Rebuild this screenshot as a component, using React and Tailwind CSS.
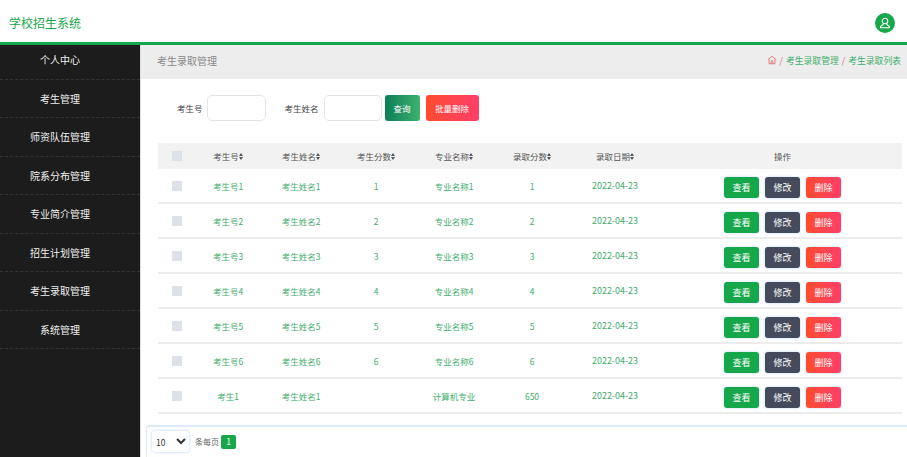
import { useState } from "react";

const menus = ["个人中心", "考生管理", "师资队伍管理", "院系分布管理", "专业简介管理", "招生计划管理", "考生录取管理", "系统管理"];
const heads = [
  { label: "考生号", w: "w-[66px]" },
  { label: "考生姓名", w: "w-[80px]" },
  { label: "考生分数", w: "w-[70px]" },
  { label: "专业名称", w: "w-[86px]" },
  { label: "录取分数", w: "w-[70px]" },
  { label: "录取日期", w: "w-[96px]" },
];
const rows = [
  ["考生号1", "考生姓名1", "1", "专业名称1", "1"],
  ["考生号2", "考生姓名2", "2", "专业名称2", "2"],
  ["考生号3", "考生姓名3", "3", "专业名称3", "3"],
  ["考生号4", "考生姓名4", "4", "专业名称4", "4"],
  ["考生号5", "考生姓名5", "5", "专业名称5", "5"],
  ["考生号6", "考生姓名6", "6", "专业名称6", "6"],
  ["考生1", "考生姓名1", "", "计算机专业", "650"],
];
const widths = ["w-[66px]", "w-[80px]", "w-[70px]", "w-[86px]", "w-[70px]"];

function SortIcon() {
  return (
    <svg width="4" height="7" viewBox="0 0 4 7" className="shrink-0 text-[#555]" fill="currentColor">
      <path d="M2 0 4 3H0z" />
      <path d="M2 7 0 4h4z" />
    </svg>
  );
}

function Check() {
  return (
    <div className="w-[37px] shrink-0 flex justify-center">
      <span className="w-[10px] h-[10px] bg-[#dde1e8] block" />
    </div>
  );
}

function RowButton({ className, children }) {
  return (
    <button className={`w-[35px] h-[21px] rounded-[3px] text-white text-[9px] leading-none shadow-[0_0_3px_#bcd9f5] ${className}`}>
      {children}
    </button>
  );
}

export default function App() {
  const [size, setSize] = useState("10");
  return (
    <div className="w-[907px] h-[457px] overflow-hidden bg-white flex flex-col font-['Noto_Sans_CJK_SC','Liberation_Sans',sans-serif]">
      <header className="h-[45px] shrink-0 border-b-[3px] border-[#16a74a] flex items-center justify-between pt-[3px] pl-[9px] pr-[12px]">
        <h1 className="text-[12px] font-normal text-[#16a74a]">学校招生系统</h1>
        <div className="w-5 h-5 rounded-full bg-[#16a74a] flex items-center justify-center">
          <svg width="12" height="12" viewBox="0 0 24 24" fill="none" stroke="white" strokeWidth="2.2" strokeLinecap="round" strokeLinejoin="round">
            <circle cx="12" cy="8" r="5.5" />
            <path d="M8.5 13 8 15.5 3 19v2.5h18V19l-5-3.5-.5-2.5" />
          </svg>
        </div>
      </header>

      <div className="flex-1 flex min-h-0">
        <aside className="w-[140px] shrink-0 bg-[#1c1c1c]">
          {menus.map((m, i) => (
            <div
              key={m}
              className={`flex items-center justify-center pr-[20px] text-[10px] text-[#f0f0f0] border-b border-dashed border-[#333] ${i === 0 ? "h-[34.5px] pb-[4px]" : "h-[38.5px]"}`}
            >
              {m}
            </div>
          ))}
        </aside>

        <main className="flex-1 min-w-0 border-l-[1px] border-[#ddd]">
          <div className="h-[33.5px] bg-[#ededed] flex items-center justify-between pl-[16px] pr-[6px] pb-[2px]">
            <span className="text-[10px] text-[#888]">考生录取管理</span>
            <div className="flex items-center gap-[3px] text-[8.8px] text-[#3fae6c]">
              <svg width="10" height="10" viewBox="0 0 24 24" fill="none" stroke="#e46a6a" strokeWidth="2" className="mb-[2px]">
                <path d="M2 11 12 3l10 8" />
                <path d="M5 10v11h14V10" />
                <path d="M10 21v-7h4v7" />
              </svg>
              <span className="text-[#e46a6a]">/</span>
              <span>考生录取管理</span>
              <span className="text-[#e46a6a]">/</span>
              <span>考生录取列表</span>
            </div>
          </div>

          <div className="flex items-center h-[26px] mt-[16.5px] pl-[36px] text-[8.5px] text-[#444]">
            <span>考生号</span>
            <input className="w-[59px] h-[26px] ml-[4px] border border-[#e4e4e4] rounded-[5px] bg-white" />
            <span className="ml-[19px]">考生姓名</span>
            <input className="w-[58px] h-[26px] ml-[5px] border border-[#e4e4e4] rounded-[5px] bg-white" />
            <button className="w-[35px] h-[26px] ml-[3px] rounded-[3px] text-white text-[8.5px] bg-gradient-to-r from-[#0b7d57] to-[#3bb36f]">查询</button>
            <button className="w-[53px] h-[26px] ml-[6px] rounded-[3px] text-white text-[8.5px] bg-gradient-to-r from-[#ff4b2b] to-[#ff3e67]">批量删除</button>
          </div>

          <div className="ml-[17px] w-[744px] mt-[22px]">
            <div className="h-[26px] bg-[#f2f2f2] flex items-center text-[8.5px] text-[#555]">
              <Check />
              {heads.map((h) => (
                <div key={h.label} className={`${h.w} flex items-center justify-center`}>
                  {h.label}
                  <SortIcon />
                </div>
              ))}
              <div className="flex-1 text-center">操作</div>
            </div>
            {rows.map((r, i) => (
              <div key={i} className="h-[35px] pt-[1px] flex items-center text-[8.5px] leading-[12px] text-[#3fae6c] border-b-2 border-[#ececec]">
                <Check />
                {r.map((c, j) => (
                  <div key={j} className={`${widths[j]} text-center`}>{c}</div>
                ))}
                <div className="w-[96px] text-center text-[9px] leading-[12px]">2022-04-23</div>
                <div className="flex-1 flex justify-center gap-[6px] pt-[3px]">
                  <RowButton className="bg-[#16a74a]">查看</RowButton>
                  <RowButton className="bg-[#454a5c]">修改</RowButton>
                  <RowButton className="bg-gradient-to-r from-[#ff4b2b] to-[#ff3e67]">删除</RowButton>
                </div>
              </div>
            ))}
          </div>

          <div className="ml-[5px] mt-[11px] h-[40px] border-t-2 border-l border-[#dcebfa] rounded-tl-[3px] flex items-center pl-[5px] pb-[9px] text-[8px] text-[#666]">
            <select
              value={size}
              onChange={(e) => setSize(e.target.value)}
              className="w-[37px] h-[21px] text-[8.5px] text-[#333] bg-white rounded-[3px] shadow-[0_0_3px_#a9d0f5]"
            >
              <option value="10">10</option>
              <option value="20">20</option>
            </select>
            <span className="ml-[6px]">条每页</span>
            <span className="ml-[2px] w-[15px] h-[14px] rounded-[2px] bg-[#16a74a] text-white text-[8.5px] flex items-center justify-center">1</span>
          </div>
        </main>
      </div>
    </div>
  );
}
